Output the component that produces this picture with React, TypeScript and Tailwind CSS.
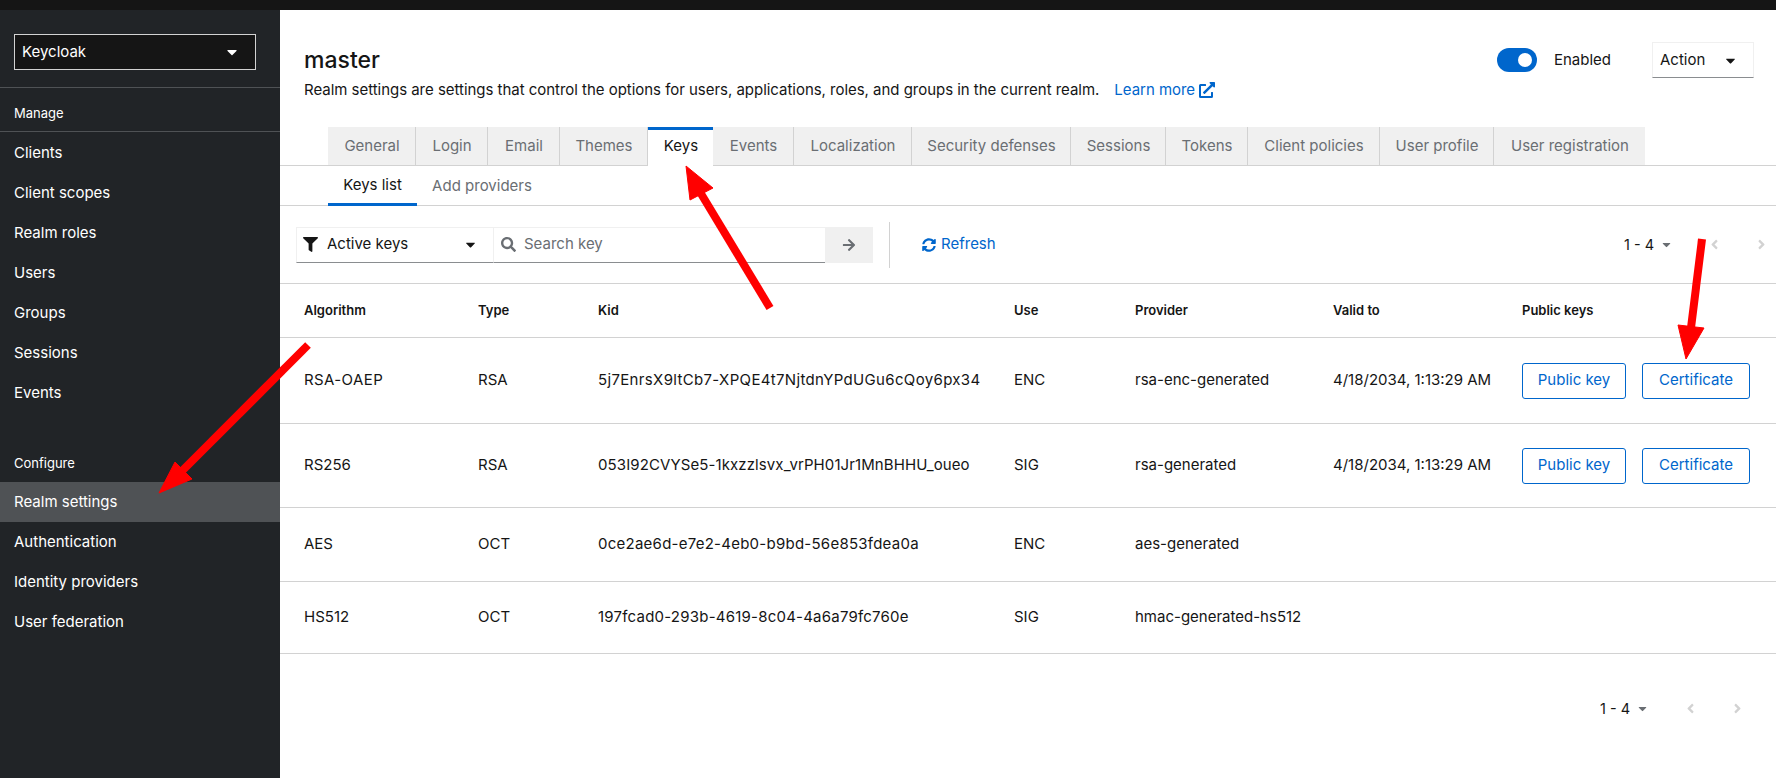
import { FaAngleLeft, FaAngleRight, FaArrowRight, FaCaretDown, FaExternalLinkAlt, FaFilter, FaSearch, FaSyncAlt } from "react-icons/fa";

const manage = ["Clients", "Client scopes", "Realm roles", "Users", "Groups", "Sessions", "Events"];
const configure = ["Realm settings", "Authentication", "Identity providers", "User federation"];

const tabs = [
  { name: "General", w: "w-[88px]" },
  { name: "Login", w: "w-[72px]" },
  { name: "Email", w: "w-[72px]" },
  { name: "Themes", w: "w-[88px]" },
  { name: "Keys", w: "w-[65px]" },
  { name: "Events", w: "w-[81px]" },
  { name: "Localization", w: "w-[118px]" },
  { name: "Security defenses", w: "w-[159px]" },
  { name: "Sessions", w: "w-[95px]" },
  { name: "Tokens", w: "w-[82px]" },
  { name: "Client policies", w: "w-[132px]" },
  { name: "User profile", w: "w-[114px]" },
  { name: "User registration", w: "w-[151px]" },
];

const rows = [
  { alg: "RSA-OAEP", type: "RSA", kid: "5j7EnrsX9ltCb7-XPQE4t7NjtdnYPdUGu6cQoy6px34", use: "ENC", provider: "rsa-enc-generated", valid: "4/18/2034, 1:13:29 AM", h: "h-[86px]", keys: true, algCls: "tracking-[0.4px]", kidCls: "tracking-[0.34px]" },
  { alg: "RS256", type: "RSA", kid: "053I92CVYSe5-1kxzzlsvx_vrPH01Jr1MnBHHU_oueo", use: "SIG", provider: "rsa-generated", valid: "4/18/2034, 1:13:29 AM", h: "h-[84px]", keys: true, algCls: "", kidCls: "tracking-[0.1px]" },
  { alg: "AES", type: "OCT", kid: "0ce2ae6d-e7e2-4eb0-b9bd-56e853fdea0a", use: "ENC", provider: "aes-generated", valid: "", h: "h-[74px]", keys: false, algCls: "", kidCls: "tracking-[0.25px]" },
  { alg: "HS512", type: "OCT", kid: "197fcad0-293b-4619-8c04-4a6a79fc760e", use: "SIG", provider: "hmac-generated-hs512", valid: "", h: "h-[72px]", keys: false, algCls: "", kidCls: "tracking-[0.22px]" },
];

const columns = "grid grid-cols-[174px_120px_416px_121px_198px_189px_1fr] items-center";

const Pager = ({ className }: { className: string }) => (
  <div className={`flex items-center text-[#151515] ${className}`}>
    <span className="w-[36px] whitespace-nowrap text-[14.5px]">1 - 4</span>
    <FaCaretDown className="text-[13px] text-[#6a6e73]" />
    <FaAngleLeft className="ml-[34px] text-[15px] text-[#d2d2d2]" />
    <FaAngleRight className="ml-[32px] text-[15px] text-[#d2d2d2]" />
  </div>
);

export default function App() {
  return (
    <div className="relative flex h-screen flex-col overflow-hidden bg-white font-['Inter',sans-serif] text-[15px] text-[#151515]">
      <div className="h-[10px] shrink-0 bg-[#151515]" />
      <div className="flex min-h-0 flex-1">
        {/* sidebar */}
        <aside className="w-[280px] shrink-0 bg-[#212427] text-white">
          <div className="border-b border-[#4f5255] px-[14px] pt-[24px] pb-[17px]">
            <div className="flex h-[36px] w-[242px] items-center justify-between border border-[#d2d2d2] bg-[#151515] pr-[15px] pl-[7px]">
              <span>Keycloak</span>
              <FaCaretDown className="text-[16px]" />
            </div>
          </div>
          <div className="flex h-[44px] items-center border-b border-[#4f5255] px-[14px] pt-[8px] text-[13px]">Manage</div>
          <nav className="pt-[1px]">
            {manage.map((item) => (
              <div key={item} className="flex h-[40px] items-center px-[14px]">{item}</div>
            ))}
          </nav>
          <div className="mt-[31px] flex h-[38px] items-center px-[14px] pt-[2px] text-[13px]">Configure</div>
          <nav>
            {configure.map((item, i) => (
              <div key={item} className={`flex h-[40px] items-center px-[14px] pt-[1px] ${i === 0 ? "bg-[#4f5255]" : ""}`}>{item}</div>
            ))}
          </nav>
        </aside>

        {/* main */}
        <main className="min-w-0 flex-1">
          <div className="flex h-[117px] items-start justify-between pr-[22px] pl-[24px]">
            <div className="pt-[35px]">
              <h1 className="text-[23px] leading-[30px] font-medium">master</h1>
              <p className="mt-[3px] flex items-center whitespace-nowrap leading-[24px] tracking-[-0.03px]">
                Realm settings are settings that control the options for users, applications, roles, and groups in the current realm.
                <a className="ml-[15px] flex items-center gap-[4px] text-[#0066cc]">
                  Learn more <FaExternalLinkAlt className="text-[16px]" />
                </a>
              </p>
            </div>
            <div className="flex items-center pt-[32px]">
              <span className="relative h-[24px] w-[40px] rounded-full bg-[#0066cc]">
                <span className="absolute top-[5px] right-[5px] h-[14px] w-[14px] rounded-full bg-white" />
              </span>
              <span className="ml-[17px]">Enabled</span>
              <div className="ml-[41px] flex h-[36px] w-[102px] items-center justify-between border border-[#f0f0f0] border-b-[#8a8d90] pr-[15px] pl-[7px]">
                <span>Action</span>
                <FaCaretDown className="text-[15px]" />
              </div>
            </div>
          </div>

          {/* tabs */}
          <div className="flex h-[39px] border-b border-[#d2d2d2] pl-[48px]">
            {tabs.map((tab) =>
              tab.name === "Keys" ? (
                <div key={tab.name} className={`-mb-px flex h-[39px] items-center justify-center border-t-[3px] border-[#0066cc] bg-white pb-[3px] pl-px ${tab.w}`}>
                  {tab.name}
                </div>
              ) : (
                <div key={tab.name} className={`flex items-center justify-center border-r border-[#d2d2d2] bg-[#f0f0f0] pl-px text-[#6a6e73] last:border-r-0 ${tab.w}`}>
                  {tab.name}
                </div>
              ),
            )}
          </div>
          <div className="flex h-[40px] border-b border-[#d2d2d2] pl-[48px]">
            <div className="-mb-px flex w-[89px] items-center justify-center border-b-[3px] border-[#0066cc] pt-[1px]">Keys list</div>
            <div className="flex w-[130px] items-center justify-center pt-[1px] text-[#6a6e73]">Add providers</div>
          </div>

          {/* toolbar */}
          <div className="flex h-[78px] items-center border-b border-[#d2d2d2] pr-[7px] pl-[16px]">
            <div className="flex h-[36px] w-[198px] items-center border border-[#f0f0f0] border-b-[#8a8d90] pr-[15px] pl-[6px]">
              <FaFilter className="text-[15px]" />
              <span className="ml-[9px] flex-1">Active keys</span>
              <FaCaretDown className="text-[15px]" />
            </div>
            <div className="flex h-[36px] w-[331px] items-center border-t border-[#f0f0f0] border-b border-b-[#8a8d90] pl-[7px] text-[#6a6e73]">
              <FaSearch className="text-[15px]" />
              <span className="ml-[8px]">Search key</span>
            </div>
            <div className="flex h-[36px] w-[48px] items-center justify-center bg-[#f0f0f0] text-[#6a6e73]">
              <FaArrowRight className="text-[14px]" />
            </div>
            <div className="ml-[16px] h-[46px] w-px bg-[#d2d2d2]" />
            <div className="ml-[32px] flex items-center gap-[5px] text-[#0066cc]">
              <FaSyncAlt className="text-[14px]" />
              <span>Refresh</span>
            </div>
            <Pager className="ml-auto" />
          </div>

          {/* table */}
          <div className={`${columns} h-[54px] border-b border-[#d2d2d2] pl-[24px] text-[13px] font-semibold`}>
            <span>Algorithm</span>
            <span>Type</span>
            <span>Kid</span>
            <span>Use</span>
            <span>Provider</span>
            <span>Valid to</span>
            <span>Public keys</span>
          </div>
          {rows.map((row) => (
            <div key={row.alg} className={`${columns} ${row.h} border-b border-[#d2d2d2] pl-[24px]`}>
              <span className={row.algCls}>{row.alg}</span>
              <span>{row.type}</span>
              <span className={`whitespace-nowrap ${row.kidCls}`}>{row.kid}</span>
              <span>{row.use}</span>
              <span>{row.provider}</span>
              <span className="whitespace-nowrap">{row.valid}</span>
              {row.keys && (
                <div className="flex gap-[16px] text-[#0066cc]">
                  <button className="h-[36px] w-[104px] rounded-[3px] border border-[#0066cc]">Public key</button>
                  <button className="h-[36px] w-[108px] rounded-[3px] border border-[#0066cc]">Certificate</button>
                </div>
              )}
            </div>
          ))}
          <Pager className="mt-[44px] ml-[1320px]" />
        </main>
      </div>

      {/* annotation arrows drawn over the screenshot */}
      <svg className="pointer-events-none absolute inset-0 h-full w-full" viewBox="0 0 1776 778">
        <g fill="#ff0000" stroke="#ff0000">
          <line x1="308" y1="345" x2="180" y2="473" strokeWidth="8" />
          <polygon points="159,493 175,462 192,479" strokeWidth="1" />
          <line x1="770" y1="308" x2="700" y2="192" strokeWidth="8" />
          <polygon points="686,166 690,200 713,188" strokeWidth="1" />
          <line x1="1702" y1="239" x2="1691" y2="328" strokeWidth="8" />
          <polygon points="1686,359 1678,325 1704,328" strokeWidth="1" />
        </g>
      </svg>
    </div>
  );
}
